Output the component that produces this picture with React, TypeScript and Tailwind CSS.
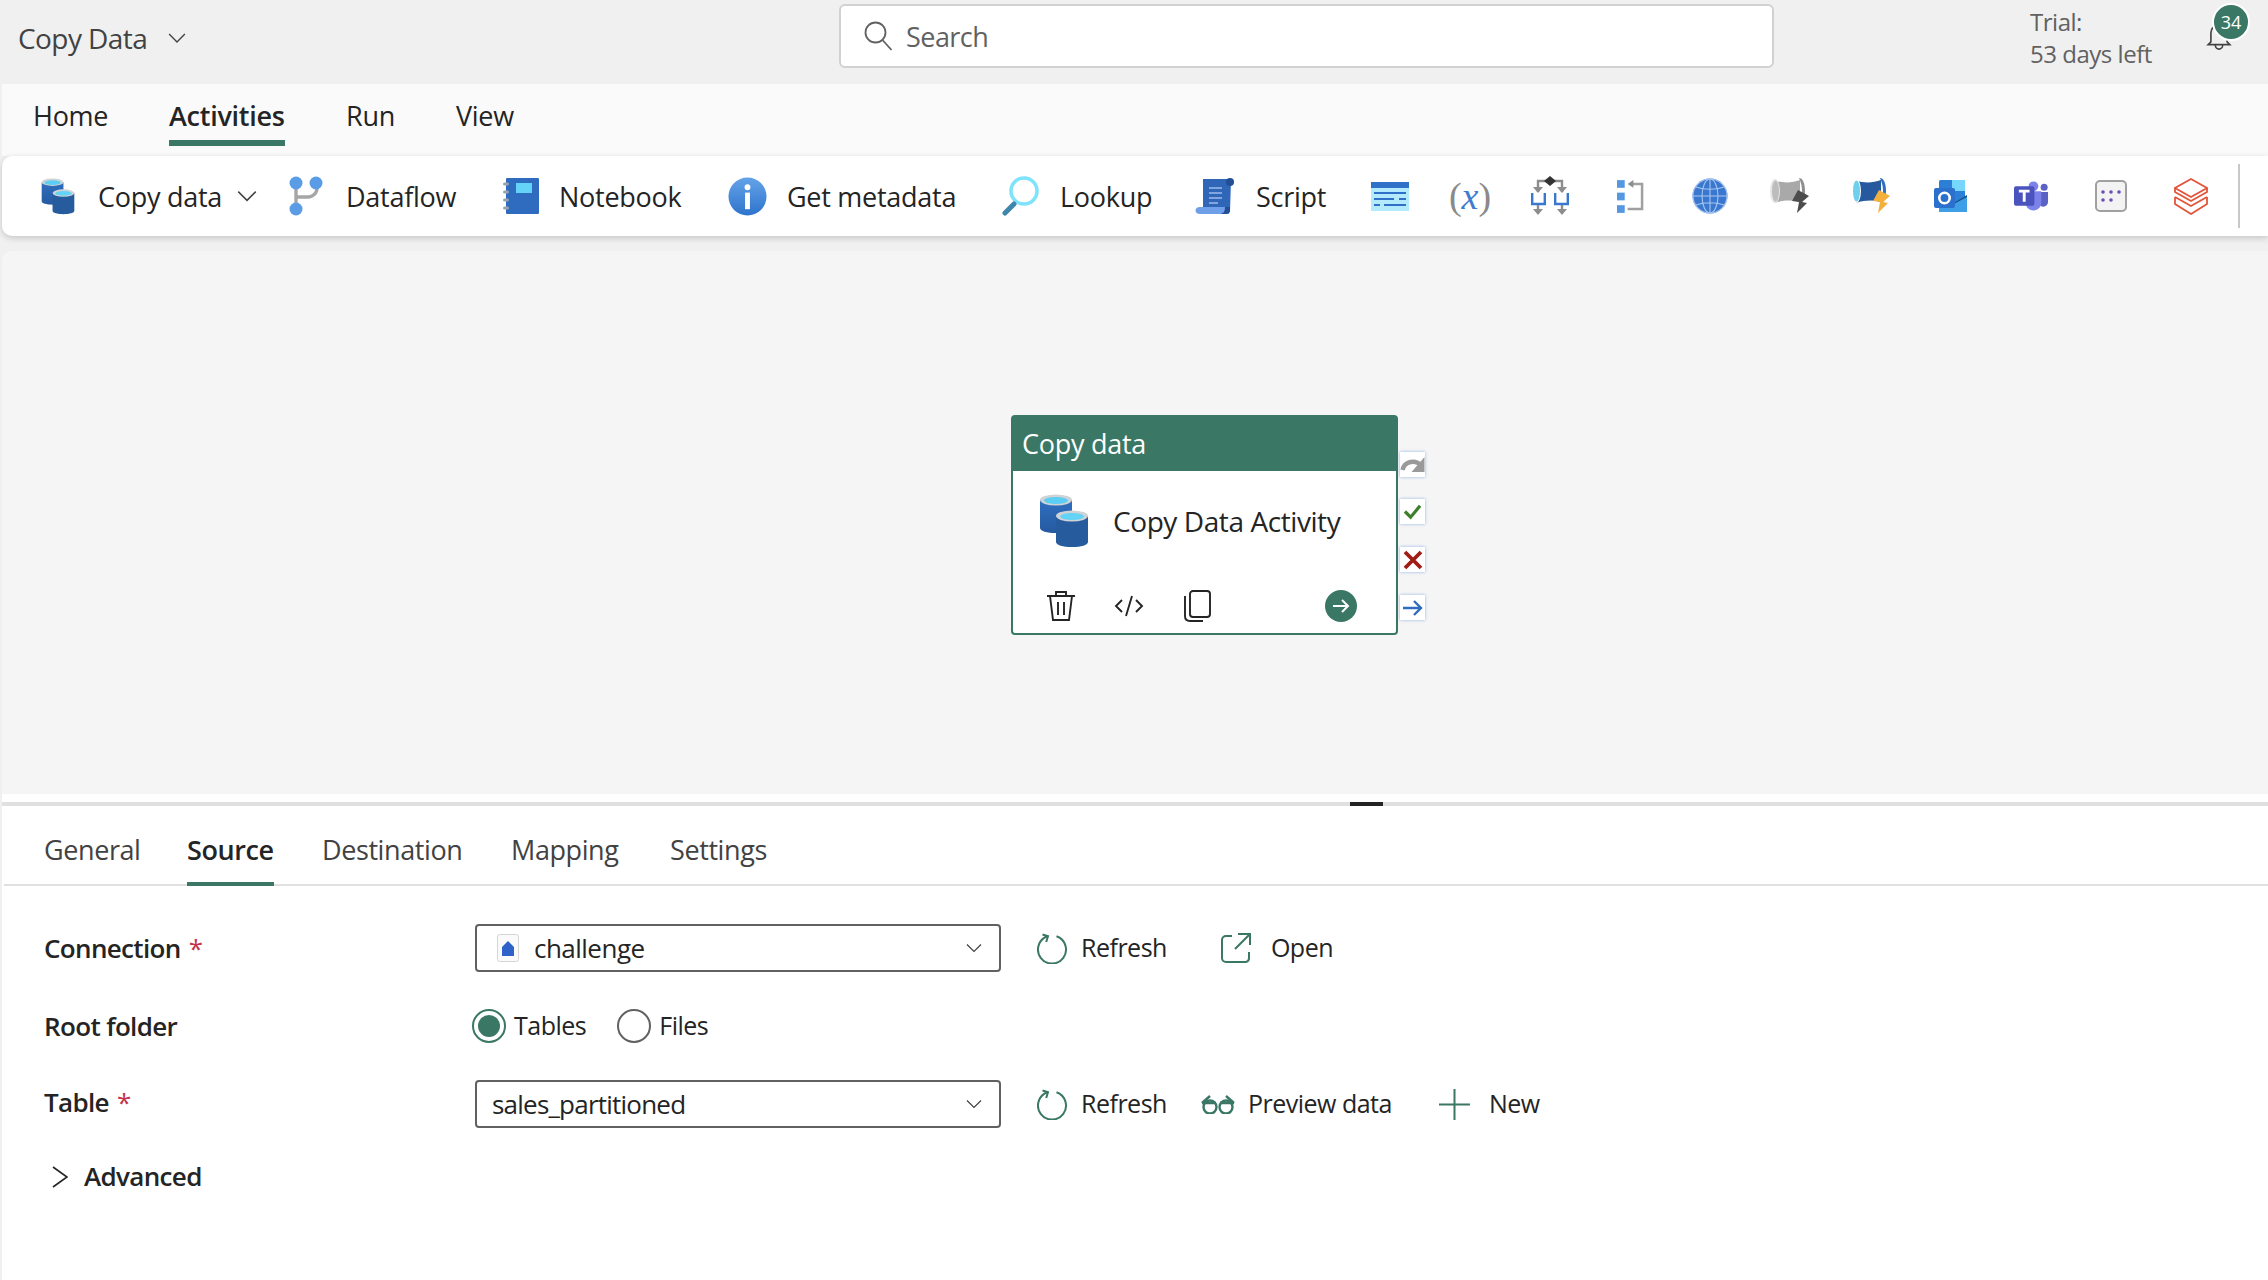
import type { ReactNode } from "react"

const GREEN = "#3a7765"

function CopyDataIcon({ className }: { className: string }) {
  return (
    <svg viewBox="0 0 50 54" className={className}>
      <defs>
        <linearGradient id="cyl" x1="0" y1="0" x2="0" y2="1">
          <stop offset="0" stopColor="#2f6fc0" />
          <stop offset="1" stopColor="#255a9f" />
        </linearGradient>
      </defs>
      <path d="M1 6v28c0 3 7 5 16 5s16-2 16-5V6z" fill="url(#cyl)" />
      <ellipse cx="17" cy="6" rx="16" ry="5.5" fill="#cfd3d6" />
      <ellipse cx="17" cy="6.5" rx="12" ry="3.5" fill="#5ccdf3" />
      <path d="M17 22v26c0 3 7 5 16 5s16-2 16-5V22z" fill="#265b9e" />
      <ellipse cx="33" cy="22" rx="16" ry="5.5" fill="#cfd3d6" />
      <ellipse cx="33" cy="22.5" rx="12" ry="3.5" fill="#63d3f7" />
    </svg>
  )
}

function DataflowIcon() {
  return (
    <svg viewBox="0 0 34 40" className="w-[34px] h-[40px]">
      <path d="M7 6v28M7 21h12c5 0 9-4 9-9V6" fill="none" stroke="#a6a6a6" strokeWidth="3.4" />
      <circle cx="7" cy="7" r="6.5" fill="#5b9ce6" />
      <circle cx="27" cy="7" r="6.5" fill="#5b9ce6" />
      <circle cx="7" cy="33" r="6.5" fill="#5b9ce6" />
    </svg>
  )
}

function NotebookIcon() {
  return (
    <svg viewBox="0 0 37 38" className="w-[37px] h-[38px]">
      <rect x="4" y="1" width="33" height="36" rx="1" fill="#2f6cc0" />
      <rect x="14" y="6" width="16" height="10" fill="#63d3f7" />
      {[7, 15, 23, 31].map((y) => (
        <rect key={y} x="1" y={y - 1.5} width="6" height="3" rx="1.5" fill="#9aa3ad" />
      ))}
    </svg>
  )
}

function InfoIcon() {
  return (
    <svg viewBox="0 0 40 40" className="w-[39px] h-[39px]">
      <defs>
        <linearGradient id="inf" x1="0" y1="0" x2="0" y2="1">
          <stop offset="0" stopColor="#63a3e8" />
          <stop offset="1" stopColor="#2f74cc" />
        </linearGradient>
      </defs>
      <circle cx="20" cy="20" r="19.5" fill="url(#inf)" />
      <circle cx="20" cy="10.5" r="3" fill="#fff" />
      <rect x="17.5" y="16" width="5" height="17" fill="#fff" />
    </svg>
  )
}

function LookupIcon() {
  return (
    <svg viewBox="0 0 37 40" className="w-[37px] h-[40px]">
      <circle cx="22" cy="15" r="13" fill="none" stroke="#7fe3fb" strokeWidth="3.6" />
      <path d="M3 37l9-9" stroke="#3f86ad" strokeWidth="5" strokeLinecap="round" />
    </svg>
  )
}

function ScriptIcon() {
  return (
    <svg viewBox="0 0 40 38" className="w-[40px] h-[38px]">
      <path d="M8 2h28l-1 33H8z" fill="#2f66b8" />
      <circle cx="35" cy="5" r="4" fill="#234f96" />
      <path d="M12 30h22v7H5c-6 0-6-7 0-7z" fill="#6f9fe8" />
      <path d="M24 37c4 0 6-2 6-7h5v4c0 2-2 3-4 3z" fill="#234f96" />
      <path d="M14 11h13M14 16h13M14 21h13M14 26h9" stroke="#9dbbea" strokeWidth="1.4" />
    </svg>
  )
}

function FormIcon() {
  return (
    <svg viewBox="0 0 38 29" className="w-[38px] h-[29px]">
      <rect width="38" height="29" fill="#b3ebfd" />
      <rect width="38" height="6" fill="#2f71c8" />
      <path d="M3 11h32M3 17h20M28 17h7M3 23h6M13 23h22" stroke="#2f71c8" strokeWidth="2" />
    </svg>
  )
}

function VariableIcon() {
  return (
    <span className="flex items-center justify-center w-[38px] font-['Liberation_Serif',serif] text-[38px] leading-none">
      <span className="text-[#8a8a8a] font-light">(</span>
      <span className="italic text-[#3f7bd0]">x</span>
      <span className="text-[#8a8a8a] font-light">)</span>
    </span>
  )
}

function SwitchIcon() {
  return (
    <svg viewBox="0 0 38 40" className="w-[38px] h-[40px]">
      <path d="M7 16V5h24v11" fill="none" stroke="#8d8d8d" strokeWidth="2.4" />
      <path d="M2 11h10l-5 6zM26 11h10l-5 6z" fill="#8d8d8d" />
      <path d="M19 0l6 5-6 5-6-5z" fill="#333" />
      <path d="M1.2 17v11h12.6V17M24.2 17v11h12.6V17" fill="none" stroke="#3a78d0" strokeWidth="2.4" />
      <path d="M7 29v6M31 29v6" stroke="#8d8d8d" strokeWidth="2.4" />
      <path d="M2 33h10l-5 6zM26 33h10l-5 6z" fill="#8d8d8d" />
    </svg>
  )
}

function UntilIcon() {
  return (
    <svg viewBox="0 0 28 36" className="w-[27px] h-[35px]">
      <rect x="0" y="1" width="8" height="8" fill="#5598e2" />
      <rect x="0" y="14" width="8" height="8" fill="#5598e2" />
      <rect x="0" y="27" width="8" height="8" fill="#5598e2" />
      <path d="M14 5h12v26H11" fill="none" stroke="#a0a0a0" strokeWidth="2.6" />
      <path d="M17 1v8l-6-4z" fill="#8d8d8d" />
    </svg>
  )
}

function GlobeIcon() {
  return (
    <svg viewBox="0 0 36 36" className="w-[36px] h-[36px]">
      <circle cx="18" cy="18" r="17.5" fill="#3a78d0" />
      <g fill="none" stroke="#a9c6f0" strokeWidth="1.1">
        <circle cx="18" cy="18" r="17" />
        <ellipse cx="18" cy="18" rx="8" ry="17" />
        <path d="M18 1v34M1 18h34M4 9c8 3 20 3 28 0M4 27c8-3 20-3 28 0" />
      </g>
    </svg>
  )
}

function PipeIcon({ blue }: { blue?: boolean }) {
  const body = blue ? "#27599f" : "#a9a9a9"
  const cap = blue ? "#2f6fc0" : "#8f8f8f"
  const face = blue ? "#6fd0ee" : "#bdbdbd"
  const bolt = blue ? "#f4b03c" : "#4d4d4d"
  return (
    <svg viewBox="0 0 40 36" className="w-[40px] h-[36px]">
      <path d="M5 3c9 2 17 2 25-1v22c-8-2-16-2-25 1z" fill={body} />
      <ellipse cx="5" cy="13" rx="5" ry="12" fill={blue ? "#fff" : "#e6e6e6"} />
      <ellipse cx="5.5" cy="13" rx="3.5" ry="10.5" fill={face} />
      <path d="M29 0c4 0 6 6 6 13 0 6-2 12-5 12 1-4 2-8 2-12s-1-9-3-13z" fill={cap} />
      <path d="M28 12l11 6-7 6 5 1-10 10 2-11-7-1z" fill={bolt} />
    </svg>
  )
}

function OutlookIcon() {
  return (
    <svg viewBox="0 0 33 32" className="w-[33px] h-[32px]">
      <rect x="5" y="0" width="26" height="32" rx="1.5" fill="#2c7fd6" />
      <rect x="18" y="0" width="13" height="11" fill="#76d6fb" />
      <path d="M5 32V18l13 6 15-8v16z" fill="#3e9fe6" />
      <path d="M18 24l15-9v2l-15 8z" fill="#1a4f8a" />
      <rect x="0" y="8" width="21" height="20" rx="2" fill="#2a70cc" />
      <circle cx="10.5" cy="18" r="5.2" fill="none" stroke="#fff" strokeWidth="2.6" />
    </svg>
  )
}

function TeamsIcon() {
  return (
    <svg viewBox="0 0 36 30" className="w-[35px] h-[30px]">
      <circle cx="31" cy="6" r="3.6" fill="#5a62c6" />
      <path d="M25 11h10v10c0 3-2 5-5 5s-5-2-5-5z" fill="#5a62c6" />
      <circle cx="20" cy="5" r="5" fill="#7b83eb" />
      <path d="M12 10h16v12c0 4-3 8-8 8s-8-4-8-8z" fill="#7b83eb" />
      <rect x="0" y="5" width="21" height="20" rx="2" fill="#4b53bc" />
      <path d="M5 10h11M10.5 10v11" stroke="#fff" strokeWidth="3" />
    </svg>
  )
}

function DotsIcon() {
  return (
    <svg viewBox="0 0 32 32" className="w-[32px] h-[32px]">
      <rect x="1" y="1" width="30" height="30" rx="4" fill="#f3f3f3" stroke="#a0a0a0" strokeWidth="2" />
      {[[8, 12], [16, 12], [24, 12], [8, 20], [16, 20]].map(([cx, cy]) => (
        <circle key={`${cx}-${cy}`} cx={cx} cy={cy} r="1.8" fill="#6b4fb3" />
      ))}
    </svg>
  )
}

function DatabricksIcon() {
  return (
    <svg viewBox="0 0 34 37" className="w-[34px] h-[37px]">
      <g fill="none" stroke="#e2553a" strokeWidth="1.8">
        <path d="M17 1l16 9-16 9L1 10z" />
        <path d="M1 10v4l16 9 16-9v-4" />
        <path d="M1 19l16 9 16-9" />
        <path d="M1 19v7l16 10 16-10v-7" />
      </g>
    </svg>
  )
}

function RefreshIcon() {
  return (
    <svg viewBox="0 0 31 31" className="w-[31px] h-[31px]">
      <path d="M19.5 3.3A14 14 0 1 1 10.5 3.3M5.5 1.5l5.5 1.7L9.2 9" fill="none" stroke={GREEN} strokeWidth="2" />
    </svg>
  )
}

function OpenIcon() {
  return (
    <svg viewBox="0 0 30 30" className="w-[30px] h-[30px]">
      <path d="M11 3H5a4 4 0 0 0-4 4v18a4 4 0 0 0 4 4h20a4 4 0 0 0 3-4v-6M17 1h12v11M28.5 1.5L14 16" fill="none" stroke={GREEN} strokeWidth="2" />
    </svg>
  )
}

function GlassesIcon() {
  return (
    <svg viewBox="0 0 34 20" className="w-[34px] h-[20px]">
      <g fill="none" stroke={GREEN} strokeWidth="2.4">
        <circle cx="9" cy="13" r="6.5" />
        <circle cx="25" cy="13" r="6.5" />
        <path d="M1 9l8-7M33 9l-8-7M1 9h14M19 9h14" />
      </g>
    </svg>
  )
}

function PlusIcon() {
  return (
    <svg viewBox="0 0 31 31" className="w-[31px] h-[31px]">
      <path d="M15.5 0v31M0 15.5h31" stroke={GREEN} strokeWidth="2" />
    </svg>
  )
}

function Chevron({ className }: { className: string }) {
  return (
    <svg viewBox="0 0 16 16" className={className}>
      <path d="M1 4.5l7 7 7-7" fill="none" stroke="currentColor" strokeWidth="1.2" />
    </svg>
  )
}

function TopBar() {
  return (
    <div className="mb-[12px] flex h-[72px] items-center pl-[18px] text-[#424242]">
      <span className="mt-[3px] w-[150px] text-[28px] tracking-[-0.02em]">Copy Data</span>
      <Chevron className="mt-[3px] w-[18px] h-[18px] text-[#424242]" />
      <div className="ml-[653px] flex h-[64px] w-[935px] items-center rounded-[6px] border-2 border-[#d1d1d1] bg-white pl-[23px]">
        <svg viewBox="0 0 28 30" className="w-[28px] h-[30px]">
          <circle cx="11.5" cy="11.5" r="10" fill="none" stroke="#616161" strokeWidth="1.8" />
          <path d="M18.5 19l9 10" stroke="#616161" strokeWidth="1.8" />
        </svg>
        <span className="ml-[14px] mt-[3px] text-[27px] tracking-[-0.02em] text-[#616161]">Search</span>
      </div>
      <div className="ml-[256px] mt-[4px] flex w-[160px] flex-col text-[24px] leading-[32px] tracking-[-0.02em] text-[#616161]">
        <span>Trial:</span>
        <span>53 days left</span>
      </div>
      <div className="relative ml-[15px] h-[40px] w-[40px]">
        <svg viewBox="0 0 28 30" className="absolute left-0 top-[7px] w-[28px] h-[27px]">
          <path d="M5 21V11a9 9 0 0 1 18 0v10l3 3H2zM10 25a4 4 0 0 0 8 0" fill="none" stroke="#424242" strokeWidth="1.8" />
        </svg>
        <span className="absolute left-[7px] top-[-13px] flex h-[38px] w-[38px] items-center justify-center rounded-full border-2 border-white bg-[#3a7765] text-[18px] text-white">
          34
        </span>
      </div>
    </div>
  )
}

const ribbonTabs = [
  { label: "Home", className: "w-[136px]" },
  { label: "Activities", className: "w-[177px]", active: true },
  { label: "Run", className: "w-[110px]" },
  { label: "View", className: "w-[80px]" },
]

function RibbonTabs() {
  return (
    <div className="ml-[2px] flex h-[72px] bg-[#fafafa] pl-[31px]">
      {ribbonTabs.map((tab) => (
        <div key={tab.label} className={`${tab.className} pt-[13px]`}>
          <div
            className={`inline-block h-[49px] text-[27px] leading-[38px] tracking-[-0.01em] ${
              tab.active ? "border-b-[6px] border-[#3a7765] font-semibold text-[#242424]" : "text-[#242424]"
            }`}
          >
            {tab.label}
          </div>
        </div>
      ))}
    </div>
  )
}

function ToolText({ children, className }: { children: ReactNode; className: string }) {
  return <span className={`${className} mt-[2px] text-[27px] tracking-[-0.01em] text-[#242424]`}>{children}</span>
}

function Toolbar() {
  return (
    <div className="ml-[2px] flex h-[80px] items-center rounded-l-[10px] bg-white pl-[39px] shadow-[0_2px_6px_rgba(0,0,0,0.18)]">
      <CopyDataIcon className="w-[34px] h-[37px]" />
      <ToolText className="ml-[23px] w-[135px]">Copy data</ToolText>
      <Chevron className="ml-[4px] w-[20px] h-[20px] text-[#424242]" />
      <span className="ml-[32px]"><DataflowIcon /></span>
      <ToolText className="ml-[23px] w-[156px]">Dataflow</ToolText>
      <NotebookIcon />
      <ToolText className="ml-[20px] w-[169px]">Notebook</ToolText>
      <InfoIcon />
      <ToolText className="ml-[20px] w-[215px]">Get metadata</ToolText>
      <LookupIcon />
      <ToolText className="ml-[21px] w-[135px]">Lookup</ToolText>
      <ScriptIcon />
      <ToolText className="ml-[21px] w-[115px]">Script</ToolText>
      <FormIcon />
      <span className="ml-[42px]"><VariableIcon /></span>
      <span className="ml-[42px]"><SwitchIcon /></span>
      <span className="ml-[48px]"><UntilIcon /></span>
      <span className="ml-[48px]"><GlobeIcon /></span>
      <span className="ml-[42px]"><PipeIcon /></span>
      <span className="ml-[41px]"><PipeIcon blue /></span>
      <span className="ml-[43px]"><OutlookIcon /></span>
      <span className="ml-[47px]"><TeamsIcon /></span>
      <span className="ml-[46px]"><DotsIcon /></span>
      <span className="ml-[47px]"><DatabricksIcon /></span>
      <div className="ml-[30px] h-[64px] w-[2px] bg-[#c8c8c8]" />
    </div>
  )
}

function Port({ top, children }: { top: string; children: ReactNode }) {
  return (
    <div className={`absolute left-[387px] ${top} flex h-[25px] w-[25px] items-center justify-center bg-white shadow-[0_0_3px_rgba(60,120,220,0.55)]`}>
      {children}
    </div>
  )
}

function ActivityNode() {
  return (
    <div className="absolute left-[1009px] top-[164px] h-[220px] w-[387px] rounded-[4px] border-2 border-[#3a7765] bg-white">
      <div className="flex h-[54px] items-center bg-[#3a7765] pl-[9px] text-[27px] tracking-[-0.01em] text-white">
        Copy data
      </div>
      <div className="flex h-[100px] items-center pl-[26px]">
        <CopyDataIcon className="w-[50px] h-[54px]" />
        <span className="ml-[24px] text-[28px] tracking-[-0.015em] text-[#242424]">Copy Data Activity</span>
      </div>
      <div className="flex items-center pl-[33px] pt-[19px]">
        <svg viewBox="0 0 30 32" className="w-[30px] h-[32px]">
          <path d="M1 6h28M10 6V2h10v4M4 6l3 24h16l3-24M12 12v13M18 12v13" fill="none" stroke="#242424" strokeWidth="1.9" />
        </svg>
        <svg viewBox="0 0 30 24" className="ml-[38px] w-[30px] h-[24px]">
          <path d="M8 6l-6 6 6 6M22 6l6 6-6 6M18 2l-6 20" fill="none" stroke="#242424" strokeWidth="1.9" />
        </svg>
        <svg viewBox="0 0 28 32" className="ml-[39px] w-[28px] h-[32px]">
          <rect x="7" y="1" width="20" height="26" rx="3" fill="none" stroke="#242424" strokeWidth="1.9" />
          <path d="M2 6v20c0 3 2 5 5 5h13" fill="none" stroke="#242424" strokeWidth="1.9" />
        </svg>
        <svg viewBox="0 0 32 32" className="ml-[114px] w-[32px] h-[32px]">
          <circle cx="16" cy="16" r="16" fill="#3a7765" />
          <path d="M8 16h15M17 10l6 6-6 6" fill="none" stroke="#fff" strokeWidth="2" />
        </svg>
      </div>
      <Port top="top-[35px]">
        <svg viewBox="0 0 24 20" className="w-[25px] h-[20px]">
          <path d="M2 15c2-9 13-11 19-4" fill="none" stroke="#9a9a9a" strokeWidth="4.4" />
          <path d="M24 2v15H11z" fill="#9a9a9a" />
        </svg>
      </Port>
      <Port top="top-[82px]">
        <svg viewBox="0 0 20 18" className="w-[19px] h-[17px]">
          <path d="M2 9l6 6L18 3" fill="none" stroke="#3d7f2a" strokeWidth="3.4" />
        </svg>
      </Port>
      <Port top="top-[130px]">
        <svg viewBox="0 0 20 20" className="w-[20px] h-[20px]">
          <path d="M2 2l16 16M18 2L2 18" fill="none" stroke="#a01c14" strokeWidth="3.8" />
        </svg>
      </Port>
      <Port top="top-[178px]">
        <svg viewBox="0 0 20 16" className="w-[20px] h-[16px]">
          <path d="M0 8h18M11 1l7 7-7 7" fill="none" stroke="#2f6cc0" strokeWidth="2.4" />
        </svg>
      </Port>
    </div>
  )
}

const panelTabs = [
  { label: "General", className: "w-[143px]" },
  { label: "Source", className: "w-[135px]", active: true },
  { label: "Destination", className: "w-[189px]" },
  { label: "Mapping", className: "w-[159px]" },
  { label: "Settings", className: "w-[110px]" },
]

function PanelTabs() {
  return (
    <div className="ml-[2px] flex h-[80px] border-b-2 border-[#e0e0e0] pl-[40px]">
      {panelTabs.map((tab) => (
        <div key={tab.label} className={tab.className}>
          <div
            className={`inline-block h-[80px] pt-[25px] text-[27px] leading-[38px] tracking-[-0.015em] ${
              tab.active ? "border-b-[4px] border-[#3a7765] font-semibold text-[#242424]" : "text-[#424242]"
            }`}
          >
            {tab.label}
          </div>
        </div>
      ))}
    </div>
  )
}

function Label({ text, required, className = "" }: { text: string; required?: boolean; className?: string }) {
  return (
    <div className={`flex w-[431px] text-[26px] font-semibold tracking-[-0.025em] text-[#242424] ${className}`}>
      {text}
      {required ? <span className="ml-[8px] font-normal text-[#c4314b]">*</span> : null}
    </div>
  )
}

function Dropdown({ children }: { children: ReactNode }) {
  return (
    <div className="flex h-[48px] w-[526px] items-center rounded-[4px] border-2 border-[#616161] bg-white pr-[17px] text-[26px] tracking-[-0.02em] text-[#242424]">
      <div className="flex flex-1 items-center">{children}</div>
      <Chevron className="w-[16px] h-[16px] text-[#424242]" />
    </div>
  )
}

function Action({ icon, label, className }: { icon: ReactNode; label: string; className: string }) {
  return (
    <div className={`flex items-center ${className} text-[25px] tracking-[-0.02em] text-[#242424]`}>
      {icon}
      <span className="ml-[13px]">{label}</span>
    </div>
  )
}

function Radio({ label, checked }: { label: string; checked?: boolean }) {
  return (
    <div className="flex items-center text-[25px] tracking-[-0.02em] text-[#242424]">
      <span
        className={`flex h-[34px] w-[34px] items-center justify-center rounded-full border-2 ${
          checked ? "border-[#3a7765]" : "border-[#616161]"
        }`}
      >
        {checked ? <span className="h-[22px] w-[22px] rounded-full bg-[#3a7765]" /> : null}
      </span>
      <span className="ml-[8px]">{label}</span>
    </div>
  )
}

function SourceForm() {
  return (
    <div className="pl-[42px]">
      <div className="mt-[38px] flex items-center">
        <Label text="Connection" required />
        <Dropdown>
          <svg viewBox="0 0 22 28" className="ml-[20px] w-[22px] h-[28px]">
            <rect x="0.5" y="0.5" width="21" height="27" rx="2" fill="#fafafa" stroke="#d5d5d5" />
            <path d="M11 7l6 6v9H5v-9z" fill="#2f62c8" />
          </svg>
          <span className="ml-[15px]">challenge</span>
        </Dropdown>
        <Action className="ml-[36px]" icon={<RefreshIcon />} label="Refresh" />
        <Action className="ml-[54px] [&>span]:ml-[20px]" icon={<OpenIcon />} label="Open" />
      </div>
      <div className="mt-[36px] flex h-[36px] items-center">
        <Label text="Root folder" />
        <div className="ml-[-3px] flex items-center gap-[31px]">
          <Radio label="Tables" checked />
          <Radio label="Files" />
        </div>
      </div>
      <div className="mt-[36px] flex items-center">
        <Label text="Table" required className="mb-[4px]" />
        <Dropdown>
          <span className="ml-[15px] tracking-[-0.03em]">sales_partitioned</span>
        </Dropdown>
        <Action className="ml-[36px]" icon={<RefreshIcon />} label="Refresh" />
        <Action className="ml-[34px]" icon={<GlassesIcon />} label="Preview data" />
        <Action className="ml-[47px] [&>span]:ml-[19px]" icon={<PlusIcon />} label="New" />
      </div>
      <div className="mt-[29px] flex items-center pl-[8px] text-[26px] font-semibold tracking-[-0.025em] text-[#242424]">
        <svg viewBox="0 0 16 22" className="w-[16px] h-[22px]">
          <path d="M1 1l14 10L1 21" fill="none" stroke="#242424" strokeWidth="1.6" />
        </svg>
        <span className="ml-[16px]">Advanced</span>
      </div>
    </div>
  )
}

export default function App() {
  return (
    <div className="flex h-[1280px] w-[2268px] flex-col overflow-hidden bg-[#f0f0f0] font-['Open_Sans',sans-serif]">
      <TopBar />
      <RibbonTabs />
      <Toolbar />
      <div className="relative ml-[2px] mt-[15px] h-[543px] rounded-tl-[10px] bg-[#f5f5f5]">
        <ActivityNode />
      </div>
      <div className="ml-[2px] flex-1 bg-white">
        <div className="h-[8px]" />
        <div className="relative h-[4px] bg-[#e0e0e0]">
          <div className="absolute left-[1348px] top-0 h-[4px] w-[33px] bg-[#242424]" />
        </div>
        <PanelTabs />
        <SourceForm />
      </div>
    </div>
  )
}
